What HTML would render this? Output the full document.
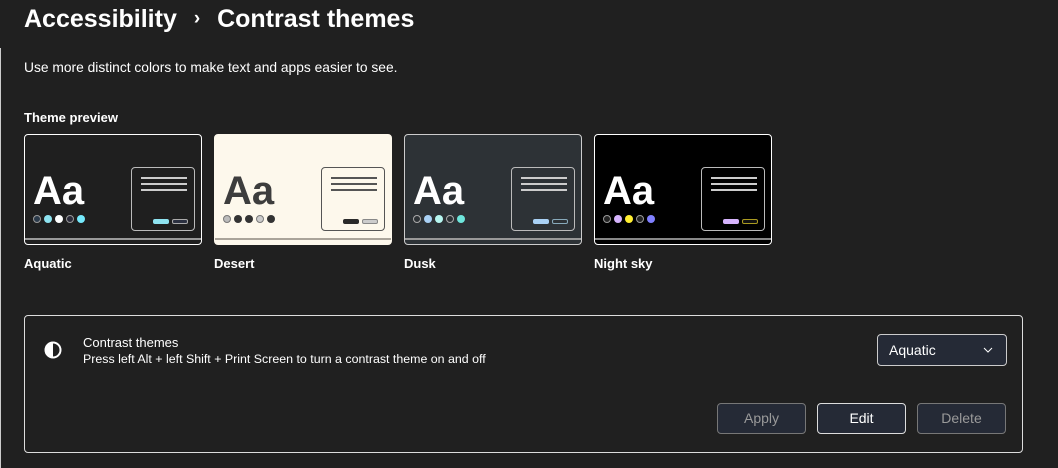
<!DOCTYPE html><html><head><style>
body{margin:0;width:1058px;height:465px;background:#202020;font-family:"Liberation Sans",sans-serif;color:#fff;position:relative;overflow:hidden}
.a{position:absolute}
.card{position:absolute;top:134px;width:176px;height:109px;border:1px solid #fff;border-radius:4px;overflow:hidden}
.aa{position:absolute;left:8px;top:36px;font-size:40px;line-height:40px;font-weight:bold}
.dot{position:absolute;top:80px;width:8px;height:8px;border-radius:50%;box-sizing:border-box}
.win{position:absolute;left:106px;top:32px;width:64px;height:64px;border:1px solid #bbb;border-radius:4px;box-sizing:border-box}
.ln{position:absolute;left:9px;width:46px;height:2px;background:#ccc}
.b1,.b2{position:absolute;top:51px;width:16px;height:5px;border-radius:2px;box-sizing:border-box}
.b1{left:21px}.b2{left:40px}
.bar{position:absolute;left:0;right:0;top:103px;height:2px;background:#999}
.lab{position:absolute;top:256px;font-size:13px;font-weight:bold}
.btn{position:absolute;top:403px;width:89px;height:31px;box-sizing:border-box;border:1px solid #777;border-radius:4px;background:#252a36;color:#9a9a9a;font-size:14px;text-align:center;line-height:29px}
</style></head><body>
<div class="a" style="left:0;top:48px;width:1px;height:420px;background:#ccc"></div>
<div class="a" style="left:24px;top:5px;font-size:25px;font-weight:bold">Accessibility <span style="font-size:19px;margin:0 10px;vertical-align:3px">›</span> Contrast themes</div>
<div class="a" style="left:24px;top:60px;font-size:13.8px">Use more distinct colors to make text and apps easier to see.</div>
<div class="a" style="left:24px;top:110px;font-size:13px;font-weight:bold">Theme preview</div>

<div class="card" style="left:24px;background:#1f1f1f">
<div class="aa">Aa</div>
<div class="dot" style="left:8px;background:#2b3a4a;border:1px solid #999"></div>
<div class="dot" style="left:19px;background:#8ee3f0"></div>
<div class="dot" style="left:30px;background:#fff"></div>
<div class="dot" style="left:41px;background:#2b2b3a;border:1px solid #999"></div>
<div class="dot" style="left:52px;background:#75e9fc"></div>
<div class="win"><div class="ln" style="top:9px"></div><div class="ln" style="top:15px"></div><div class="ln" style="top:21px"></div>
<div class="b1" style="background:#8ee3f0"></div><div class="b2" style="border:1px solid #aaa;background:#2b3040"></div></div>
<div class="bar"></div></div>

<div class="card" style="left:214px;background:#fdf8ec;border-color:#fdf8ec">
<div class="aa" style="color:#3d3d3d">Aa</div>
<div class="dot" style="left:8px;background:#bbb;border:1px solid #777"></div>
<div class="dot" style="left:19px;background:#333"></div>
<div class="dot" style="left:30px;background:#333"></div>
<div class="dot" style="left:41px;background:#ccc;border:1px solid #777"></div>
<div class="dot" style="left:52px;background:#333"></div>
<div class="win" style="border-color:#555"><div class="ln" style="top:9px;background:#555"></div><div class="ln" style="top:15px;background:#555"></div><div class="ln" style="top:21px;background:#555"></div>
<div class="b1" style="background:#2a2a2a"></div><div class="b2" style="border:1px solid #888;background:#ccc"></div></div>
<div class="bar" style="background:#aaa49a"></div></div>

<div class="card" style="left:404px;background:#2d3236;border-color:#ccc">
<div class="aa">Aa</div>
<div class="dot" style="left:8px;background:#2d3236;border:1px solid #aaa"></div>
<div class="dot" style="left:19px;background:#a9d1f5"></div>
<div class="dot" style="left:30px;background:#b6f6f0"></div>
<div class="dot" style="left:41px;background:#2d3236;border:1px solid #aaa"></div>
<div class="dot" style="left:52px;background:#6ee6dc"></div>
<div class="win"><div class="ln" style="top:9px"></div><div class="ln" style="top:15px"></div><div class="ln" style="top:21px"></div>
<div class="b1" style="background:#a9d1f5"></div><div class="b2" style="border:1px solid #8ab;background:#2d3236"></div></div>
<div class="bar"></div></div>

<div class="card" style="left:594px;background:#000">
<div class="aa">Aa</div>
<div class="dot" style="left:8px;background:#222;border:1px solid #999"></div>
<div class="dot" style="left:19px;background:#d6b4fd"></div>
<div class="dot" style="left:30px;background:#ffee32"></div>
<div class="dot" style="left:41px;background:#222;border:1px solid #999"></div>
<div class="dot" style="left:52px;background:#8080ff"></div>
<div class="win"><div class="ln" style="top:9px"></div><div class="ln" style="top:15px"></div><div class="ln" style="top:21px"></div>
<div class="b1" style="background:#d6b4fd"></div><div class="b2" style="border:1px solid #aa9a20;background:#111"></div></div>
<div class="bar" style="background:#888"></div></div>

<div class="lab" style="left:24px">Aquatic</div>
<div class="lab" style="left:214px">Desert</div>
<div class="lab" style="left:404px">Dusk</div>
<div class="lab" style="left:594px">Night sky</div>

<div class="a" style="left:24px;top:315px;width:999px;height:138px;box-sizing:border-box;border:1px solid #ddd;border-radius:4px"></div>
<svg class="a" style="left:44px;top:341px" width="18" height="18"><circle cx="9" cy="9" r="7.5" fill="none" stroke="#fff" stroke-width="2"/><path d="M9 1.5A7.5 7.5 0 0 0 9 16.5Z" fill="#fff"/></svg>
<div class="a" style="left:83px;top:335px;font-size:13px">Contrast themes</div>
<div class="a" style="left:83px;top:352px;font-size:12.4px">Press left Alt + left Shift + Print Screen to turn a contrast theme on and off</div>
<div class="a" style="left:877px;top:334px;width:130px;height:32px;box-sizing:border-box;border:1px solid #ccc;border-radius:4px;background:#252a36;font-size:14px;line-height:30px;padding-left:11px">Aquatic
<svg class="a" style="left:105px;top:11px" width="10" height="8"><path d="M1 2L5 6L9 2" fill="none" stroke="#fff" stroke-width="1"/></svg></div>
<div class="btn" style="left:717px">Apply</div>
<div class="btn" style="left:817px;border-color:#ddd;color:#fff">Edit</div>
<div class="btn" style="left:917px">Delete</div>
</body></html>
